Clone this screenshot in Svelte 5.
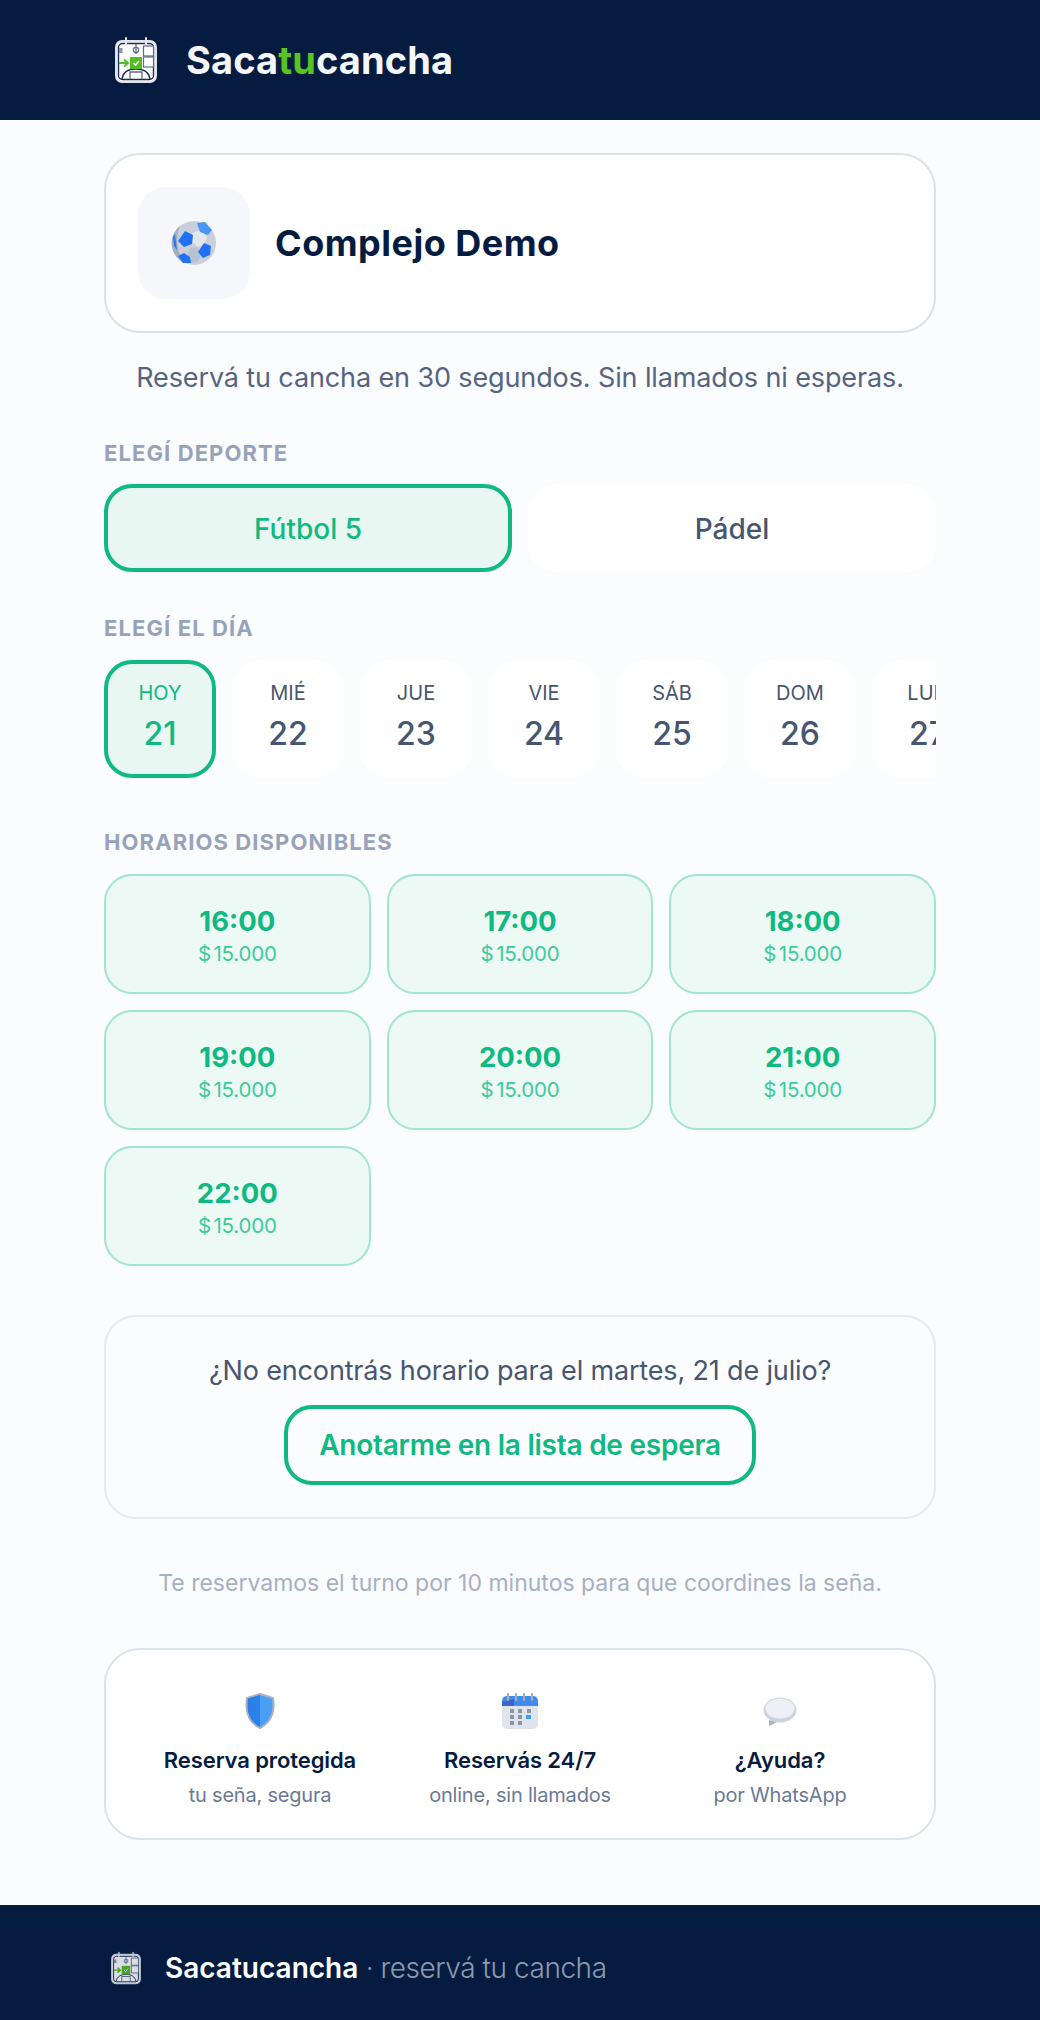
<script>
  const days = [
    { name: 'HOY', num: 21, active: true },
    { name: 'MIÉ', num: 22 },
    { name: 'JUE', num: 23 },
    { name: 'VIE', num: 24 },
    { name: 'SÁB', num: 25 },
    { name: 'DOM', num: 26 },
    { name: 'LUN', num: 27 },
  ]
  const slots = ['16:00', '17:00', '18:00', '19:00', '20:00', '21:00', '22:00']
</script>

{#snippet logo(size, dim)}
  <svg class="logo" class:logo--dim={dim} width={size} height={size} viewBox="0 0 44 48" aria-hidden="true">
    <rect x="2" y="5" width="40" height="41" rx="6" fill="#fff" stroke="#dfe4ee" stroke-width="2" />
    <rect x="4.5" y="7.5" width="35" height="36" rx="4" fill="none" stroke="#1c2f57" stroke-width="1.4" />
    <path d="M12 2v7M32 2v7" stroke="#e8ebf2" stroke-width="2" stroke-linecap="round" />
    <path d="M22 8v10" stroke="#5c6b8a" stroke-width="1.2" />
    <circle cx="22" cy="14" r="2.6" fill="none" stroke="#5c6b8a" stroke-width="1.2" />
    <rect x="5" y="12" width="3.5" height="5" fill="#8b97ad" />
    <rect x="29.5" y="10" width="10" height="10" fill="#fff" stroke="#5c6b8a" stroke-width="1.2" />
    <rect x="29.5" y="21" width="10" height="10" fill="#fff" stroke="#5c6b8a" stroke-width="1.2" />
    <path d="M8 43c1-7 7-10 14-10s13 3 14 10" fill="none" stroke="#1c2f57" stroke-width="1.4" />
    <path d="M16 43v-7h12v7" fill="none" stroke="#5c6b8a" stroke-width="1.3" />
    <rect x="16" y="21" width="12" height="12" fill="#55bb25" />
    <path d="M19.5 27l2 2 3.500-4" fill="none" stroke="#fff" stroke-width="1.4" />
    <path d="M5 27h8M10 23.500l4 3.500-4 3.500" fill="none" stroke="#55bb25" stroke-width="2" />
  </svg>
{/snippet}

<header class="top">
  <div class="top__inner">
    {@render logo(48, false)}
    <span class="brand">Saca<em>tu</em>cancha</span>
  </div>
</header>

<main class="page">
  <section class="venue">
    <div class="venue__icon">
      <svg width="46" height="46" viewBox="0 0 46 46" aria-hidden="true">
        <circle cx="23" cy="23" r="22" fill="#c9d0dc" />
        <path d="M9 6a22 22 0 0 0 4 37C6 32 4 18 9 6z" fill="#a4aec0" />
        <path d="M21 13l9-3 6 7-2 7-7 3-6-5z" fill="#e2e6ed" />
        <path d="M20 27l7 1 3 7-3 7-9 1-2-8z" fill="#b9c2d0" />
        <path d="M14 11l8 4-1 9-8 3-6-6z" fill="#1f73f2" />
        <path d="M33 23l7 3-1 9-7 3-5-6z" fill="#1f73f2" />
        <path d="M7 36l6-3 6 4 1 6-8 0z" fill="#1f73f2" />
        <path d="M26 3l8-1 7 8-4 5-8-3z" fill="#4a94f5" />
        <path d="M2 17l2-3 1 8 1 8-3-4z" fill="#2a79ee" />
      </svg>
    </div>
    <h1>Complejo Demo</h1>
  </section>

  <p class="tagline">Reservá tu cancha en 30 segundos. Sin llamados ni esperas.</p>

  <h2 class="label">ELEGÍ DEPORTE</h2>
  <div class="sports">
    <button class="sport sport--active">Fútbol 5</button>
    <button class="sport">Pádel</button>
  </div>

  <h2 class="label label--day">ELEGÍ EL DÍA</h2>
  <div class="days">
    {#each days as d}
      <button class="day" class:day--active={d.active}>
        <span class="day__name">{d.name}</span>
        <span class="day__num">{d.num}</span>
      </button>
    {/each}
  </div>

  <h2 class="label label--slots">HORARIOS DISPONIBLES</h2>
  <div class="slots">
    {#each slots as s}
      <button class="slot">
        <span class="slot__time">{s}</span>
        <span class="slot__price">$ 15.000</span>
      </button>
    {/each}
  </div>

  <section class="wait">
    <p>¿No encontrás horario para el martes, 21 de julio?</p>
    <button class="wait__btn">Anotarme en la lista de espera</button>
  </section>

  <p class="note">Te reservamos el turno por 10 minutos para que coordines la seña.</p>

  <section class="trust">
    <div class="trust__item">
      <svg width="30" height="36" viewBox="0 0 30 36" aria-hidden="true">
        <path d="M15 1l13 4c2 14-1 24-13 30C3 29 0 19 2 5z" fill="#4a9ff5" stroke="#aab2c0" stroke-width="2" />
        <path d="M15 2L3 5.500C1.500 19 4 28 15 34z" fill="#2b7fe8" />
      </svg>
      <strong>Reserva protegida</strong>
      <span>tu seña, segura</span>
    </div>
    <div class="trust__item">
      <svg width="36" height="36" viewBox="0 0 36 36" aria-hidden="true">
        <rect x="0" y="3" width="36" height="33" rx="5" fill="#dfe3ec" />
        <path d="M0 13V8a5 5 0 0 1 5-5h26a5 5 0 0 1 5 5v5z" fill="#3f8cf0" />
        <path d="M0 13V9l12-3v7z" fill="#3f63c9" />
        <path d="M6 1v6M14 1v6M22 1v6M30 1v6" stroke="#a5aebd" stroke-width="2.200" stroke-linecap="round" />
        <g fill="#8b93a5">
          <rect x="8" y="16" width="4" height="4" /><rect x="16" y="16" width="4" height="4" /><rect x="25" y="16" width="4" height="4" />
          <rect x="8" y="22" width="4" height="4" /><rect x="16" y="22" width="4" height="4" />
          <rect x="8" y="28" width="4" height="4" /><rect x="16" y="28" width="4" height="4" />
        </g>
        <rect x="24" y="22" width="5" height="4" fill="#3f9cf5" />
      </svg>
      <strong>Reservás 24/7</strong>
      <span>online, sin llamados</span>
    </div>
    <div class="trust__item">
      <svg width="36" height="36" viewBox="0 0 36 36" aria-hidden="true">
        <path d="M7 27l0 6 8-4z" fill="#aab3c4" />
        <ellipse cx="18" cy="17" rx="16.500" ry="12.500" fill="#ccd2de" />
        <ellipse cx="18" cy="15.500" rx="14.500" ry="10" fill="#eef0f5" />
      </svg>
      <strong>¿Ayuda?</strong>
      <span>por WhatsApp</span>
    </div>
  </section>
</main>

<footer class="foot">
  <div class="foot__inner">
    {@render logo(34, true)}
    <span class="foot__text"><b>Sacatucancha</b> · reservá tu cancha</span>
  </div>
</footer>

<style>
  :global(body) {
    margin: 0;
    background: #fbfcfe;
    font-family: Inter, 'Noto Sans', sans-serif;
    color: #051c40;
  }

  button {
    font-family: inherit;
    cursor: pointer;
    padding: 0;
  }

  .top {
    height: 120px;
    background: #051c40;
  }
  .top__inner {
    width: 832px;
    margin: 0 auto;
    height: 100%;
    display: flex;
    align-items: center;
    gap: 26px;
    padding-left: 8px;
    box-sizing: border-box;
  }
  .logo {
    flex: 0 0 auto;
  }
  .logo--dim {
    opacity: 0.85;
  }
  .brand {
    font-size: 38px;
    font-weight: 700;
    letter-spacing: 0.1px;
    color: #f4f6fa;
  }
  .brand em {
    font-style: normal;
    color: #58c322;
  }

  .page {
    width: 832px;
    margin: 0 auto;
    padding: 33px 0 65px;
    box-sizing: border-box;
  }

  .venue {
    height: 180px;
    box-sizing: border-box;
    display: flex;
    align-items: center;
    gap: 25px;
    padding: 0 32px;
    background: #fff;
    border: 2px solid #dbe2ec;
    border-radius: 36px;
  }
  .venue__icon {
    width: 112px;
    height: 112px;
    border-radius: 28px;
    background: #f5f7fa;
    display: flex;
    align-items: center;
    justify-content: center;
  }
  h1 {
    margin: 0;
    font-size: 36px;
    font-weight: 700;
    letter-spacing: 0.5px;
    color: #051c40;
  }

  .tagline {
    margin: 26px 0 0;
    text-align: center;
    font-size: 27px;
    line-height: 38px;
    letter-spacing: -0.12px;
    color: #55647f;
  }

  .label {
    margin: 41px 0 0;
    font-size: 22px;
    line-height: 30px;
    font-weight: 700;
    letter-spacing: 1.1px;
    color: #97a3ba;
  }
  .label--day {
    margin-top: 41px;
  }
  .label--slots {
    margin-top: 49px;
  }

  .sports {
    margin-top: 16px;
    display: grid;
    grid-template-columns: 1fr 1fr;
    gap: 16px;
  }
  .sport {
    height: 88px;
    border: none;
    border-radius: 28px;
    background: #fff;
    font-size: 28px;
    font-weight: 500;
    color: #475670;
    padding-top: 2px;
  }
  .sport--active {
    background: #e8f7f2;
    border: 4px solid #10b981;
    color: #10b981;
  }

  .days {
    margin-top: 17px;
    display: flex;
    gap: 16px;
    overflow: hidden;
  }
  .day {
    flex: 0 0 112px;
    height: 118px;
    border: none;
    border-radius: 28px;
    background: #fff;
    color: #475670;
    display: flex;
    flex-direction: column;
    align-items: center;
    justify-content: center;
    gap: 9px;
    padding-bottom: 3px;
  }
  .day--active {
    background: #e8f7f2;
    border: 4px solid #10b981;
    color: #10b981;
  }
  .day__name {
    font-size: 20px;
    line-height: 24px;
    font-weight: 400;
  }
  .day__num {
    font-size: 32px;
    line-height: 40px;
    font-weight: 500;
  }

  .slots {
    margin-top: 17px;
    display: grid;
    grid-template-columns: repeat(3, 1fr);
    gap: 16px;
  }
  .slot {
    height: 120px;
    border: 2px solid #a0e6cc;
    border-radius: 28px;
    background: #ecf9f5;
    display: flex;
    flex-direction: column;
    align-items: center;
    justify-content: center;
    gap: 1px;
    padding-top: 2px;
  }
  .slot__time {
    font-size: 27.5px;
    line-height: 36px;
    font-weight: 700;
    color: #10b981;
  }
  .slot__price {
    font-size: 20.5px;
    line-height: 28px;
    letter-spacing: -0.2px;
    word-spacing: -3px;
    color: #3ecb9b;
  }

  .wait {
    margin-top: 49px;
    height: 204px;
    box-sizing: border-box;
    border: 2px solid #e6e9f2;
    border-radius: 32px;
    display: flex;
    flex-direction: column;
    align-items: center;
    padding-top: 35px;
    gap: 15px;
  }
  .wait p {
    margin: 0;
    font-size: 27px;
    line-height: 38px;
    letter-spacing: -0.16px;
    color: #475670;
  }
  .wait__btn {
    width: 472px;
    height: 80px;
    border: 4px solid #10b981;
    border-radius: 28px;
    background: transparent;
    font-size: 28px;
    font-weight: 600;
    letter-spacing: -0.25px;
    color: #10b981;
  }

  .note {
    margin: 48px 0 0;
    text-align: center;
    font-size: 23px;
    line-height: 32px;
    color: #a6b0c4;
  }

  .trust {
    margin-top: 49px;
    height: 192px;
    box-sizing: border-box;
    background: #fff;
    border: 2px solid #dbe2ec;
    border-radius: 36px;
    display: grid;
    grid-template-columns: repeat(3, 1fr);
    padding: 14px 24px 0;
    align-items: center;
  }
  .trust__item {
    display: flex;
    flex-direction: column;
    align-items: center;
    text-align: center;
  }
  .trust__item strong {
    margin-top: 16px;
    font-size: 22px;
    line-height: 30px;
    font-weight: 600;
    letter-spacing: -0.1px;
    color: #051c40;
  }
  .trust__item span {
    margin-top: 6px;
    font-size: 20px;
    line-height: 28px;
    letter-spacing: -0.2px;
    color: #6b7a94;
  }

  .foot {
    height: 116px;
    background: #051c40;
  }
  .foot__inner {
    width: 832px;
    margin: 0 auto;
    height: 100%;
    display: flex;
    align-items: center;
    gap: 22px;
    padding: 10px 0 0 5px;
    box-sizing: border-box;
  }
  .foot__text {
    font-size: 28px;
    font-weight: 300;
    letter-spacing: -0.45px;
    color: #8d99ae;
  }
  .foot__text b {
    font-weight: 600;
    letter-spacing: 0;
    color: #fff;
  }
</style>
